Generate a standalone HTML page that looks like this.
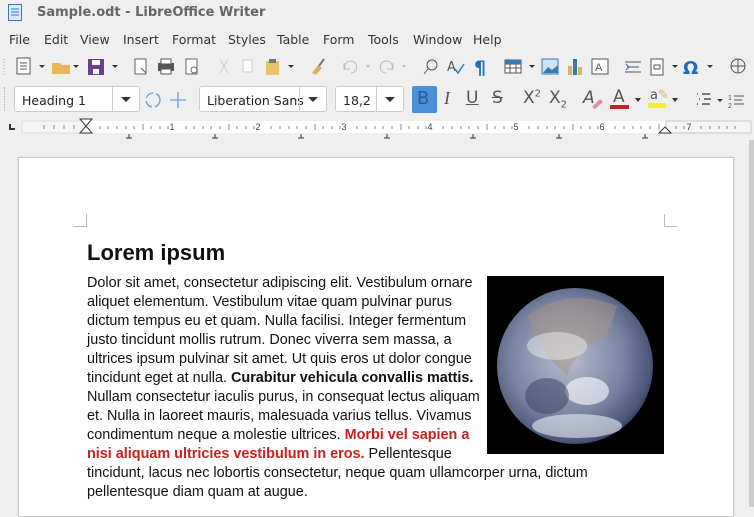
<!DOCTYPE html>
<html><head><meta charset="utf-8"><style>
*{margin:0;padding:0;box-sizing:border-box}
body{width:754px;height:507px;overflow:hidden;background:#efefef;font-family:"Liberation Sans",sans-serif;position:relative;color:#333}
.abs{position:absolute}
.title{left:37px;top:5px;font-size:13px;font-weight:bold;color:#666;font-family:"DejaVu Sans",sans-serif}
.menu{top:32px;left:9px;font-size:12.5px;color:#333;font-family:"DejaVu Sans",sans-serif}
.menu span{position:absolute;white-space:nowrap}
.box{background:#fff;border:1px solid #ccc;border-radius:3px;height:26px;font-size:12.5px;font-family:"DejaVu Sans",sans-serif;color:#222;padding:6px 0 0 7px}
.dd{position:absolute;top:0;right:0;height:24px;border-left:1px solid #ccc}
.tri{position:absolute;width:0;height:0;border-left:5px solid transparent;border-right:5px solid transparent;border-top:5px solid #333}
.ic{position:absolute;font-family:"DejaVu Sans",sans-serif;color:#555}
.page{left:18px;top:157px;width:716px;height:360px;background:#fff;border:1px solid #c8c8c8;box-shadow:0 0 2px #ddd}
.txt{position:absolute;left:87px;font-size:14.4px;color:#111;white-space:nowrap;line-height:19px}
.red{color:#c9211e;font-weight:bold}
</style></head><body>
<svg class="abs" style="left:8px;top:4px" width="14" height="17"><rect x="0.5" y="0.5" width="13" height="16" fill="#dbe9f7" stroke="#3a79b7"/><path d="M3 5h8M3 8h8M3 11h8" stroke="#3a79b7"/></svg>
<div class="abs title">Sample.odt - LibreOffice Writer</div>
<div class="abs menu">
<span style="left:0">File</span><span style="left:35px">Edit</span><span style="left:71px">View</span><span style="left:114px">Insert</span><span style="left:163px">Format</span><span style="left:219px">Styles</span><span style="left:268px">Table</span><span style="left:314px">Form</span><span style="left:359px">Tools</span><span style="left:404px">Window</span><span style="left:464px">Help</span>
</div>
<svg class="abs" style="left:0;top:55px" width="754" height="24">
<path d="M4 4v16" stroke="#aaa" stroke-dasharray="1 2"/>
<rect x="17" y="3" width="13" height="16" fill="#fff" stroke="#555"/><path d="M20 8h7M20 11h7M20 14h7" stroke="#555"/>
<path d="M39 10l3 3 3-3z" fill="#333"/>
<path d="M52 8h8l2 2h8v9H52z" fill="#e8b75a"/><path d="M73 10l3 3 3-3z" fill="#333"/>
<rect x="88" y="4" width="16" height="16" fill="#6b3f8a"/><rect x="92" y="5" width="8" height="5" fill="#fff"/><rect x="93" y="14" width="6" height="5" fill="#fff"/><path d="M112 10l3 3 3-3z" fill="#333"/>
<rect x="135" y="4" width="11" height="15" fill="#fff" stroke="#666"/><path d="M141 13l5 5" stroke="#c33"/>
<rect x="158" y="8" width="16" height="8" fill="#555"/><rect x="161" y="4" width="10" height="5" fill="#fff" stroke="#555"/><rect x="161" y="14" width="10" height="5" fill="#fff" stroke="#555"/>
<rect x="186" y="4" width="11" height="15" fill="#fff" stroke="#666"/><circle cx="194" cy="15" r="3" fill="none" stroke="#666"/>
<path d="M220 4l8 14M228 4l-8 14" stroke="#ccc"/>
<rect x="243" y="5" width="9" height="12" fill="#fff" stroke="#ccc"/>
<rect x="266" y="6" width="13" height="14" fill="#e8c56a"/><rect x="269" y="4" width="7" height="4" fill="#777"/><path d="M288 10l3 3 3-3z" fill="#333"/>
<path d="M312 18l6-8 4 3-6 7z" fill="#d9b36a"/><path d="M319 11l5-7" stroke="#777" stroke-width="2"/>
<path d="M345 14a6 6 0 1 1 6 4M344 8v6h6" stroke="#bbb" fill="none"/><path d="M366 10l2 3 2-3z" fill="#bbb"/>
<path d="M392 14a6 6 0 1 0-6 4M393 8v6h-6" stroke="#bbb" fill="none"/><path d="M402 10l2 3 2-3z" fill="#bbb"/>
<circle cx="432" cy="10" r="5" fill="none" stroke="#555"/><path d="M428 14l-4 5" stroke="#555"/>
<text x="447" y="16" font-size="13" fill="#555" font-family="DejaVu Sans">A</text><path d="M455 14l3 4 6-9" stroke="#3a79b7" stroke-width="1.5" fill="none"/>
<text x="474" y="19" font-size="19" fill="#1e6fb8" font-family="DejaVu Sans" font-weight="bold">¶</text>
<rect x="505" y="5" width="16" height="13" fill="#fff" stroke="#555"/><path d="M505 9h16M510 9v9M516 9v9M505 13h16" stroke="#555"/><rect x="505" y="5" width="16" height="4" fill="#3a79b7"/><path d="M529 10l3 3 3-3z" fill="#333"/>
<rect x="542" y="4" width="16" height="15" fill="#cde3f5" stroke="#3a79b7"/><path d="M543 18l5-6 4 3 6-5v8z" fill="#3a79b7"/>
<rect x="568" y="11" width="4" height="9" fill="#d9b36a"/><rect x="573" y="4" width="4" height="16" fill="#3a79b7"/><rect x="578" y="12" width="4" height="8" fill="#d9b36a"/>
<rect x="592" y="4" width="16" height="15" fill="#fff" stroke="#555"/><text x="595" y="16" font-size="11" fill="#555">A</text>
<path d="M625 7h16M625 17h16M627 12h12" stroke="#555"/><path d="M626 9l3 3-3 3" stroke="#3a79b7" fill="none"/>
<rect x="651" y="4" width="12" height="16" fill="#fff" stroke="#555"/><rect x="654" y="10" width="6" height="4" fill="none" stroke="#555"/><path d="M672 10l3 3 3-3z" fill="#333"/>
<text x="683" y="19" font-size="18" fill="#1e6fb8" font-family="DejaVu Sans" font-weight="bold">Ω</text><path d="M707 10l3 3 3-3z" fill="#333"/>
<circle cx="738" cy="11" r="7" fill="none" stroke="#555"/><path d="M731 11h14M738 4v14" stroke="#555"/>
</svg>
<div class="abs" style="left:4px;top:87px;width:2px;height:24px;border-left:1px dotted #aaa"></div>
<div class="abs box" style="left:14px;top:86px;width:126px">Heading 1<div class="dd" style="width:27px"><div class="tri" style="left:8px;top:10px"></div></div></div>
<svg class="abs" style="left:143px;top:89px" width="50" height="22"><circle cx="10" cy="11" r="7" fill="none" stroke="#6aa0d6" stroke-width="1.3" stroke-dasharray="9 3"/><path d="M35 3v16M27 11h16" stroke="#6aa0d6" stroke-width="1.3"/></svg>
<div class="abs box" style="left:199px;top:86px;width:128px">Liberation Sans<div class="dd" style="width:27px"><div class="tri" style="left:8px;top:10px"></div></div></div>
<div class="abs box" style="left:335px;top:86px;width:69px">18,2<div class="dd" style="width:27px"><div class="tri" style="left:8px;top:10px"></div></div></div>
<div class="abs" style="left:412px;top:86px;width:25px;height:27px;background:#4a90d9;border-radius:2px"></div>
<div class="ic" style="left:417px;top:88px;font-size:18px;color:#2a5d95">B</div>
<div class="ic" style="left:444px;top:88px;font-size:18px;font-family:'Liberation Serif',serif;font-style:italic">I</div>
<div class="ic" style="left:466px;top:88px;font-size:17px;text-decoration:underline">U</div>
<div class="ic" style="left:492px;top:88px;font-size:17px;text-decoration:line-through">S</div>
<div class="ic" style="left:523px;top:88px;font-size:17px">X<sup style="font-size:10px">2</sup></div>
<div class="ic" style="left:549px;top:88px;font-size:17px">X<sub style="font-size:10px">2</sub></div>
<div class="ic" style="left:583px;top:88px;font-size:17px;font-style:italic">A</div>
<svg class="abs" style="left:590px;top:97px" width="14" height="12"><path d="M2 10l8-8 3 3-8 7z" fill="#e58aa5"/></svg>
<div class="ic" style="left:613px;top:87px;font-size:17px">A</div><div class="abs" style="left:610px;top:105px;width:19px;height:4px;background:#c9211e"></div>
<div class="tri" style="left:635px;top:98px;border-width:4px 3px 0 3px"></div>
<div class="ic" style="left:650px;top:88px;font-size:13px;color:#555">a<span style="color:#d9b36a">✎</span></div><div class="abs" style="left:648px;top:103px;width:18px;height:5px;background:#f0f036"></div>
<div class="tri" style="left:672px;top:98px;border-width:4px 3px 0 3px"></div>
<svg class="abs" style="left:693px;top:90px" width="61" height="20"><path d="M4 4h1M9 4h8M6 9h1M11 9h7M4 14h1M9 14h8" stroke="#555" stroke-width="1.5"/><path d="M24 9l3 3 3-3z" fill="#333"/><text x="35" y="10" font-size="7" fill="#555">1</text><text x="35" y="18" font-size="7" fill="#555">2</text><path d="M41 6h10M41 14h10M41 10h8" stroke="#555"/></svg>
<div class="abs" style="left:9px;top:124px;width:6px;height:6px;border-left:2px solid #333;border-bottom:2px solid #333"></div>
<svg class="abs" style="left:0;top:118px" width="754" height="22">
<rect x="22" y="3" width="64" height="12" fill="#f5f5f5" stroke="#ddd"/>
<rect x="86" y="3" width="580" height="12" fill="#fff"/>
<rect x="666" y="3" width="85" height="12" fill="#f5f5f5" stroke="#ccc"/>
<g stroke="#888">
<path d="M44 7v4M54 7v4M64 7v4M74 7v4M100 8v3M108 8v3M117 8v3M126 8v3M134 8v3M143 6v6M151 8v3M160 8v3M168 8v3M186 8v3M194 8v3M203 8v3M211 8v3M220 8v3M229 6v6M237 8v3M246 8v3M254 8v3M271 8v3M280 8v3M289 8v3M297 8v3M306 8v3M315 6v6M323 8v3M332 8v3M340 8v3M357 8v3M366 8v3M375 8v3M383 8v3M392 8v3M401 6v6M409 8v3M418 8v3M426 8v3M443 8v3M452 8v3M461 8v3M469 8v3M478 8v3M487 6v6M495 8v3M504 8v3M512 8v3M529 8v3M538 8v3M547 8v3M555 8v3M564 8v3M573 6v6M581 8v3M590 8v3M598 8v3M615 8v3M624 8v3M633 8v3M641 8v3M650 8v3M659 6v6M676 8v3M684 8v3M701 8v3M710 8v3M719 8v3M727 8v3M735 8v3"/>
<path d="M129 16v4M126 20h6M215 16v4M212 20h6M301 16v4M298 20h6M387 16v4M384 20h6M473 16v4M470 20h6M559 16v4M556 20h6M645 16v4M642 20h6" stroke="#333"/>
</g>
<g font-size="9" fill="#444" text-anchor="middle"><text x="172" y="12">1</text><text x="258" y="12">2</text><text x="344" y="12">3</text><text x="430" y="12">4</text><text x="516" y="12">5</text><text x="602" y="12">6</text><text x="689" y="12">7</text></g>
<path d="M80 1h12l-6 7zM80 15h12l-6-7z" fill="#fff" stroke="#333"/>
<path d="M659 15l6-6 6 6z" fill="#fff" stroke="#333"/>
</svg>
<div class="abs" style="left:749px;top:140px;width:5px;height:367px;background:#ccc"></div>
<div class="abs page"></div>
<div class="abs" style="left:74px;top:214px;width:13px;height:13px;border-right:1px solid #bbb;border-bottom:1px solid #bbb"></div>
<div class="abs" style="left:664px;top:214px;width:13px;height:13px;border-left:1px solid #bbb;border-bottom:1px solid #bbb"></div>
<div class="abs" style="left:87px;top:240px;font-size:22px;font-weight:bold;color:#111">Lorem ipsum</div>
<svg class="abs" style="left:487px;top:276px" width="177" height="178">
<defs><radialGradient id="g" cx="0.45" cy="0.45" r="0.6"><stop offset="0" stop-color="#b8bfd0"/><stop offset="0.6" stop-color="#7a84a4"/><stop offset="0.9" stop-color="#4a5478"/><stop offset="1" stop-color="#2a3050"/></radialGradient></defs>
<rect width="177" height="178" fill="#000"/>
<circle cx="88" cy="90" r="78" fill="url(#g)"/>
<path d="M40 40q40-30 90-10l-10 30q-30 10-40 40l-20-20z" fill="#a89480" opacity="0.5"/>
<ellipse cx="100" cy="115" rx="22" ry="14" fill="#fff" opacity="0.6"/>
<ellipse cx="70" cy="70" rx="30" ry="14" fill="#fff" opacity="0.4"/>
<ellipse cx="60" cy="120" rx="22" ry="18" fill="#3a4060" opacity="0.5"/>
<ellipse cx="90" cy="150" rx="45" ry="12" fill="#e8ecf4" opacity="0.6"/>
</svg>
<div class="txt" style="top:274px">Dolor sit amet, consectetur adipiscing elit. Vestibulum ornare<br>aliquet elementum. Vestibulum vitae quam pulvinar purus<br>dictum tempus eu et quam. Nulla facilisi. Integer fermentum<br>justo tincidunt mollis rutrum. Donec viverra sem massa, a<br>ultrices ipsum pulvinar sit amet. Ut quis eros ut dolor congue<br>tincidunt eget at nulla. <b>Curabitur vehicula convallis mattis.</b><br>Nullam consectetur iaculis purus, in consequat lectus aliquam<br>et. Nulla in laoreet mauris, malesuada varius tellus. Vivamus<br>condimentum neque a molestie ultrices. <span class="red">Morbi vel sapien a</span><br><span class="red">nisi aliquam ultricies vestibulum in eros.</span> Pellentesque<br>tincidunt, lacus nec lobortis consectetur, neque quam ullamcorper urna, dictum<br>pellentesque diam quam at augue.</div>
</body></html>
